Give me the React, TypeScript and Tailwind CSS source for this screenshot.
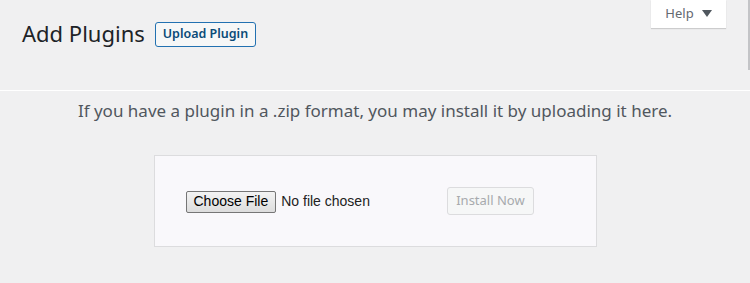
import React from 'react';

export default function App() {
  return (
    <div className="relative w-[750px] h-[283px] overflow-hidden bg-[#f0f0f1] font-['Noto_Sans',sans-serif] text-[#1d2327]">
      {/* scrollbar sliver */}
      <div className="absolute right-0 top-0 w-[2px] h-[70px] bg-[#c3c4c7]" />

      {/* help tab */}
      <button className="absolute top-0 right-[24px] w-[75px] h-[28px] bg-white shadow-[0_1px_1px_rgba(0,0,0,0.15)] flex items-center justify-center gap-[8px] text-[13px] text-[#646970]">
        <span>Help</span>
        <svg width="10" height="7" viewBox="0 0 10 7" className="mt-[-2px]">
          <path d="M0 0h10L5 7z" fill="#50575e" />
        </svg>
      </button>

      <div className="h-[90px] flex items-start pl-[22px] pt-[19px] gap-[10px]">
        <h1 className="text-[22px] leading-[29px] font-normal">Add Plugins</h1>
        <button className="mt-[3px] h-[25px] px-[7px] rounded-[3px] border border-[#2271b1] bg-[#f6f7f7] text-[12.5px] font-semibold text-[#0a4b78] leading-none">
          Upload Plugin
        </button>
      </div>
      <div className="h-px bg-white" />

      <p className="mt-[9px] text-center text-[17px] leading-[22px] text-[#50575e]">
        If you have a plugin in a .zip format, you may install it by uploading it here.
      </p>

      <div className="mx-auto mt-[33px] w-[443px] h-[92px] border border-[#dcdcde] bg-[#f9f8fb] flex items-center pl-[31px]">
        <div className="flex items-center font-['Liberation_Sans',sans-serif] text-[14px] mt-[1px]">
          <span className="h-[22px] px-[7px] flex items-center border border-[#767676] rounded-[2px] bg-gradient-to-b from-[#f3f3f3] to-[#dddddd] text-black">
            Choose File
          </span>
          <span className="ml-[5px] text-[#222]">No file chosen</span>
        </div>
        <button
          disabled
          className="ml-[77px] h-[28px] w-[87px] rounded-[3px] border border-[#dcdcde] bg-[#f6f7f7] text-[13px] text-[#a7aaad]"
        >
          Install Now
        </button>
      </div>
    </div>
  );
}
